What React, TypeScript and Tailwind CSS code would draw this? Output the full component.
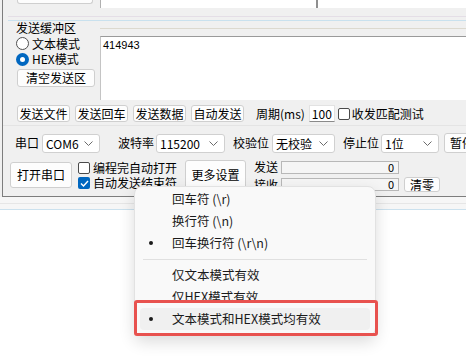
import React from 'react';

function Chevron() {
    return (
        <svg width="9" height="5" viewBox="0 0 9 5" className="shrink-0">
            <path d="M0.5 0.5 L4.5 4.5 L8.5 0.5" fill="none" stroke="#6b6b6b" strokeWidth="1" />
        </svg>
    );
}

function Select({ value, w }: { value: string; w: string }) {
    return (
        <div className={`${w} h-[19px] bg-white border border-[#d0d0d0] rounded-[3px] flex items-center justify-between pl-[3px] pr-[6px] shrink-0`}>
            <span className="text-[12px] leading-none whitespace-nowrap">{value}</span>
            <Chevron />
        </div>
    );
}

function Btn({ label, cls }: { label: string; cls: string }) {
    return (
        <div className={`${cls} bg-[#fdfdfd] border border-[#cfcfcf] rounded-[3px] flex items-center justify-center text-[12px] leading-none shrink-0 whitespace-nowrap`}>
            {label}
        </div>
    );
}

function Label({ text, cls }: { text: string; cls: string }) {
    return (
        <div className={`${cls} h-[20px] flex items-center text-[12px] leading-none whitespace-nowrap shrink-0`}>
            {text}
        </div>
    );
}

function CheckBox({ checked }: { checked?: boolean }) {
    if (checked) {
        return (
            <div className="w-[12px] h-[12px] rounded-[2px] bg-[#0067c0] flex items-center justify-center shrink-0">
                <svg width="9" height="7" viewBox="0 0 9 7">
                    <path d="M1 3.5 L3.5 6 L8 1" fill="none" stroke="white" strokeWidth="1.4" />
                </svg>
            </div>
        );
    }
    return <div className="w-[12px] h-[12px] rounded-[2px] border border-[#4a4a4a] bg-white shrink-0" />;
}

export default function App() {
    return (
        <div className="w-[466px] h-[364px] relative overflow-hidden bg-white text-black font-['Noto_Sans_CJK_SC','Microsoft_YaHei',sans-serif]">

            {/* Serial tool window */}
            <div className="bg-[#f0f0f0] pl-[2px]">
                <div className="h-[197px] border-l border-b border-[#7d7d7d] flex flex-col">

                    {/* bottom of receive area */}
                    <div className="h-[8px] flex">
                        <div className="w-[97px] pl-[14px] shrink-0">
                            <div className="w-[76px] h-[4px] bg-[#fdfdfd] border-x border-b border-[#cfcfcf] rounded-b-[3px]" />
                        </div>
                        <div className="flex-1 bg-white border-l border-[#b0b0b0]">
                            <div className="ml-[215px] w-[2px] h-full bg-[#8f8f8f]" />
                        </div>
                    </div>

                    {/* group border lines */}
                    <div className="h-[13px] pl-[5px]">
                        <div className="h-[8px]" />
                        <div className="h-px bg-[#e4dee6]" />
                        <div className="h-[3px]" />
                        <div className="h-px bg-[#c9e1ee]" />
                    </div>

                    {/* send buffer */}
                    <div className="h-[79px] flex">
                        <div className="w-[97px] pl-[13px] flex flex-col shrink-0">
                            <div className="h-[15px] text-[12px] leading-[14px] whitespace-nowrap">发送缓冲区</div>
                            <div className="h-[15px] flex items-center gap-[3px]">
                                <div className="w-[13px] h-[13px] rounded-full border border-[#505050] bg-white shrink-0" />
                                <span className="text-[12px] leading-none whitespace-nowrap">文本模式</span>
                            </div>
                            <div className="h-[16px] flex items-center gap-[3px]">
                                <div className="w-[13px] h-[13px] rounded-full bg-[#0067c0] flex items-center justify-center shrink-0">
                                    <div className="w-[5px] h-[5px] rounded-full bg-white" />
                                </div>
                                <span className="text-[12px] leading-none whitespace-nowrap">HEX模式</span>
                            </div>
                            <Btn label="清空发送区" cls="mt-[2px] ml-[1px] w-[78px] h-[18px]" />
                        </div>
                        <div className="flex-1 flex flex-col">
                            <div className="h-[7px]" />
                            <div className="h-px bg-[#dcd9cf]" />
                            <div className="h-[7px]" />
                            <div className="flex-1 bg-white border-t border-l border-t-[#9a9a9a] border-l-[#c4c4c4] pl-[2px] pt-[2px] text-[11px] leading-[12px] font-['Liberation_Sans',sans-serif]">
                                414943
                            </div>
                        </div>
                    </div>

                    {/* send buttons */}
                    <div className="h-[25px] pt-[5px] pl-[14px] flex items-start">
                        <div className="flex gap-[5px] shrink-0">
                            <Btn label="发送文件" cls="w-[53px] h-[17px]" />
                            <Btn label="发送回车" cls="w-[53px] h-[17px]" />
                            <Btn label="发送数据" cls="w-[53px] h-[17px]" />
                            <Btn label="自动发送" cls="w-[53px] h-[17px]" />
                        </div>
                        <div className="ml-[12px] h-[17px] flex items-center text-[12px] leading-none whitespace-nowrap shrink-0">
                            周期(ms)
                        </div>
                        <div className="ml-[4px] w-[26px] h-[17px] bg-white border border-[#e2e2e2] border-b-[#8a8a8a] text-[12px] leading-none flex items-center justify-end pr-[2px] shrink-0">
                            100
                        </div>
                        <div className="ml-[3px] h-[17px] flex items-center gap-[2px] shrink-0">
                            <CheckBox />
                            <span className="text-[12px] leading-none whitespace-nowrap">收发匹配测试</span>
                        </div>
                    </div>
                    <div className="h-px bg-[#e4e4e4]" />

                    {/* port settings */}
                    <div className="h-[34px] pt-[7px] pl-[12px] flex items-start overflow-hidden">
                        <Label text="串口" cls="" />
                        <div className="ml-[3px] pt-px shrink-0"><Select value="COM6" w="w-[58px]" /></div>
                        <Label text="波特率" cls="ml-[18px]" />
                        <div className="ml-[2px] pt-px shrink-0"><Select value="115200" w="w-[69px]" /></div>
                        <Label text="校验位" cls="ml-[8px]" />
                        <div className="ml-[3px] pt-px shrink-0"><Select value="无校验" w="w-[63px]" /></div>
                        <Label text="停止位" cls="ml-[8px]" />
                        <div className="ml-[2px] pt-px shrink-0"><Select value="1位" w="w-[58px]" /></div>
                        <Btn label="暂停" cls="ml-[5px] w-[44px] h-[20px] justify-start pl-[5px]" />
                    </div>

                    {/* open port row */}
                    <div className="flex-1 pl-[7px] flex items-start">
                        <Btn label="打开串口" cls="mt-[2px] w-[62px] h-[26px]" />
                        <div className="ml-[6px] flex flex-col shrink-0">
                            <div className="h-[15px] flex items-center gap-[3px]">
                                <CheckBox />
                                <span className="text-[12px] leading-none whitespace-nowrap">编程完自动打开</span>
                            </div>
                            <div className="h-[16px] flex items-center gap-[3px]">
                                <CheckBox checked />
                                <span className="text-[12px] leading-none whitespace-nowrap">自动发送结束符</span>
                            </div>
                        </div>
                        <Btn label="更多设置" cls="ml-[8px] w-[61px] h-[30px]" />
                        <div className="ml-[8px] flex flex-col shrink-0">
                            <div className="h-[14px] flex items-center">
                                <span className="w-[24px] text-[12px] leading-none whitespace-nowrap">发送</span>
                                <div className="ml-[3px] w-[118px] h-[13px] bg-[#f5f5f5] border border-[#b8b8b8] flex items-center justify-end pr-[4px] text-[11px] leading-none">0</div>
                            </div>
                            <div className="mt-[3px] h-[15px] flex items-center">
                                <span className="w-[24px] text-[12px] leading-none whitespace-nowrap">接收</span>
                                <div className="ml-[3px] w-[118px] h-[13px] bg-[#f5f5f5] border border-[#b8b8b8] flex items-center justify-end pr-[4px] text-[11px] leading-none">0</div>
                                <Btn label="清零" cls="ml-[5px] w-[36px] h-[15px]" />
                            </div>
                        </div>
                    </div>
                </div>
            </div>

            {/* strip below window */}
            <div className="h-[13px] bg-[#f6f6f6] flex flex-col">
                <div className="h-[6px]" />
                <div className="h-px bg-[#e6e6e6]" />
                <div className="h-[5px]" />
                <div className="h-px bg-[#cbe1ee]" />
            </div>

            {/* Context menu */}
            <div className="absolute left-[134px] top-[186px] w-[242px] h-[150px] bg-[#f9f9f9] border border-[#e2e2e2] rounded-[8px] shadow-[0_6px_16px_rgba(0,0,0,0.14)] pt-px text-[12.5px] text-[#1b1b1b]">
                {[
                    { t: '回车符 (\\r)', dot: false },
                    { t: '换行符 (\\n)', dot: false },
                    { t: '回车换行符 (\\r\\n)', dot: true },
                ].map((it) => (
                    <div key={it.t} className="mx-[5px] h-[22px] flex items-center">
                        <span className="w-[22px] flex justify-center">
                            {it.dot && <span className="w-[4px] h-[4px] rounded-full bg-[#1b1b1b]" />}
                        </span>
                        <span className="ml-[10px] leading-none whitespace-nowrap">{it.t}</span>
                    </div>
                ))}
                <div className="h-[10px] flex items-center mx-[8px]">
                    <div className="h-px w-full bg-[#e0e0e0]" />
                </div>
                {[
                    { t: '仅文本模式有效', dot: false, hi: false },
                    { t: '仅HEX模式有效', dot: false, hi: false },
                    { t: '文本模式和HEX模式均有效', dot: true, hi: true },
                ].map((it) => (
                    <div key={it.t} className={`mx-[5px] h-[22px] flex items-center rounded-[4px] ${it.hi ? 'bg-[#f0f0f0]' : ''}`}>
                        <span className="w-[22px] flex justify-center">
                            {it.dot && <span className="w-[4px] h-[4px] rounded-full bg-[#1b1b1b]" />}
                        </span>
                        <span className="ml-[10px] leading-none whitespace-nowrap">{it.t}</span>
                    </div>
                ))}
            </div>

            {/* annotation box */}
            <div className="absolute left-[134px] top-[300px] w-[244px] h-[36px] border-[3px] border-[#e8524f] rounded-[3px]" />
        </div>
    );
}
